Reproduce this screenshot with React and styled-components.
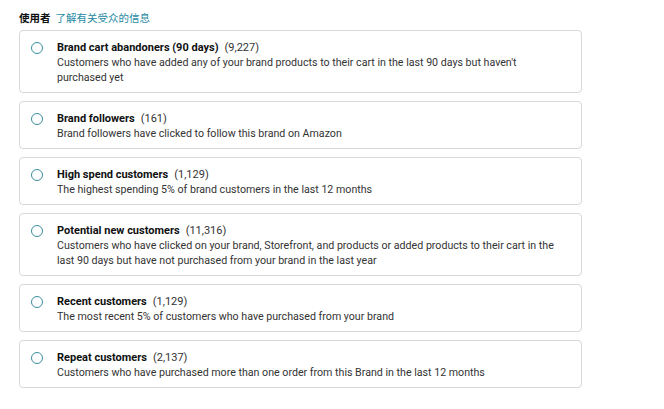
import React from 'react';
import styled, { createGlobalStyle } from 'styled-components';

const GlobalStyle = createGlobalStyle`
  body {
    margin: 0;
    background: #fff;
    font-family: Roboto, "Noto Sans CJK SC", sans-serif;
    color: #0f1111;
  }
`;

const Page = styled.div`
  width: 664px;
  height: 409px;
  padding: 10px 0 0 19px;
  box-sizing: border-box;
`;

const Heading = styled.div`
  display: flex;
  align-items: center;
  gap: 5px;
  font-size: 10.5px;
  line-height: 16px;
  height: 16px;
  margin-bottom: 4px;
  font-family: "Noto Sans CJK SC", sans-serif;
`;

const HeadingLabel = styled.span`
  font-weight: 700;
  color: #0f1111;
`;

const HeadingLink = styled.a`
  color: #1f8aa2;
  text-decoration: none;
  cursor: pointer;
`;

const List = styled.div`
  display: flex;
  flex-direction: column;
  gap: 8px;
  width: 563px;
`;

const Card = styled.label`
  display: flex;
  align-items: flex-start;
  gap: 14px;
  padding: 9px 11px 7px;
  border: 1px solid #d5d9d9;
  border-radius: 4px;
  cursor: pointer;
`;

const Radio = styled.span`
  flex: none;
  width: 12px;
  height: 12px;
  margin-top: 2px;
  border: 1.5px solid #3b8ea0;
  border-radius: 50%;
  box-sizing: border-box;
`;

const Body = styled.div`
  display: flex;
  flex-direction: column;
  font-size: 11px;
  line-height: 15px;
`;

const Title = styled.div`
  font-weight: 700;
  color: #0f1111;
`;

const Count = styled.span`
  font-weight: 400;
  color: #333;
  margin-left: 6px;
`;

const Desc = styled.div`
  color: #333;
  font-size: 10.65px;
  max-width: 505px;
`;

const audiences = [
  {
    name: 'Brand cart abandoners (90 days)',
    count: '(9,227)',
    desc: "Customers who have added any of your brand products to their cart in the last 90 days but haven't purchased yet",
  },
  {
    name: 'Brand followers',
    count: '(161)',
    desc: 'Brand followers have clicked to follow this brand on Amazon',
  },
  {
    name: 'High spend customers',
    count: '(1,129)',
    desc: 'The highest spending 5% of brand customers in the last 12 months',
  },
  {
    name: 'Potential new customers',
    count: '(11,316)',
    desc: 'Customers who have clicked on your brand, Storefront, and products or added products to their cart in the last 90 days but have not purchased from your brand in the last year',
  },
  {
    name: 'Recent customers',
    count: '(1,129)',
    desc: 'The most recent 5% of customers who have purchased from your brand',
  },
  {
    name: 'Repeat customers',
    count: '(2,137)',
    desc: 'Customers who have purchased more than one order from this Brand in the last 12 months',
  },
];

export default function App() {
  return (
    <>
      <GlobalStyle />
      <Page>
        <Heading>
          <HeadingLabel>使用者</HeadingLabel>
          <HeadingLink>了解有关受众的信息</HeadingLink>
        </Heading>
        <List>
          {audiences.map(a => (
            <Card key={a.name}>
              <Radio />
              <Body>
                <Title>
                  {a.name}
                  <Count>{a.count}</Count>
                </Title>
                <Desc>{a.desc}</Desc>
              </Body>
            </Card>
          ))}
        </List>
      </Page>
    </>
  );
}
